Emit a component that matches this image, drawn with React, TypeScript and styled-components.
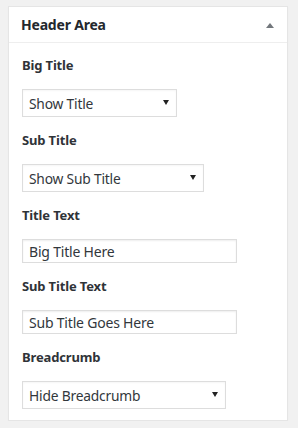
import React from "react";
import styled, { createGlobalStyle } from "styled-components";

const Global = createGlobalStyle`
  html, body { margin: 0; padding: 0; background: #f1f1f1; }
  body { font-family: "Noto Sans", "Open Sans", sans-serif; }
  * { box-sizing: border-box; }
`;

const Page = styled.div`
  padding: 6px 10px 0 8px;
`;

const Panel = styled.div`
  width: 280px;
  background: #fff;
  border: 1px solid #e5e5e5;
  box-shadow: 0 1px 1px rgba(0, 0, 0, 0.04);
`;

const Header = styled.div`
  height: 36px;
  display: flex;
  align-items: center;
  justify-content: space-between;
  padding: 0 13px 0 12px;
  border-bottom: 1px solid #eee;
`;

const HeaderTitle = styled.h2`
  margin: 0;
  font-size: 14px;
  font-weight: 700;
  color: #23282d;
  letter-spacing: -0.2px;
`;

const Toggle = styled.span`
  width: 0;
  height: 0;
  border-left: 4px solid transparent;
  border-right: 4px solid transparent;
  border-bottom: 5px solid #72777c;
  margin-top: 2px;
`;

const Body = styled.div`
  padding: 13px 12px 11px 13px;
`;

const Field = styled.div`
  display: flex;
  flex-direction: column;
  align-items: flex-start;
  & + & {
    margin-top: 14px;
  }
`;

const Label = styled.label`
  font-size: 13px;
  line-height: 18px;
  font-weight: 700;
  color: #2f3338;
  margin-bottom: 15px;
  letter-spacing: -0.15px;
`;

const SelectWrap = styled.div<{ $w: number }>`
  position: relative;
  width: ${(p) => p.$w}px;
  height: 28px;
`;

const Select = styled.select`
  appearance: none;
  -webkit-appearance: none;
  width: 100%;
  height: 100%;
  border: 1px solid #ddd;
  border-radius: 0;
  background: #fff;
  padding: 0 0 0 6px;
  font-family: inherit;
  font-size: 13.8px;
  color: #32373c;
  box-shadow: inset 0 1px 2px rgba(0, 0, 0, 0.04);
  outline: none;
  letter-spacing: -0.2px;
`;

const Arrow = styled.span`
  position: absolute;
  right: 8px;
  top: 11px;
  width: 0;
  height: 0;
  border-left: 3px solid transparent;
  border-right: 3px solid transparent;
  border-top: 5px solid #222;
  pointer-events: none;
`;

const Input = styled.input`
  width: 215px;
  height: 24px;
  border: 1px solid #ddd;
  border-radius: 0;
  background: #fff;
  padding: 0 6px;
  font-family: inherit;
  font-size: 14px;
  color: #32373c;
  box-shadow: inset 0 1px 2px rgba(0, 0, 0, 0.07);
  outline: none;
  letter-spacing: -0.2px;
`;

function SelectField({ label, value, width }: { label: string; value: string; width: number }) {
  return (
    <Field>
      <Label>{label}</Label>
      <SelectWrap $w={width}>
        <Select defaultValue={value}>
          <option>{value}</option>
        </Select>
        <Arrow />
      </SelectWrap>
    </Field>
  );
}

function TextField({ label, value }: { label: string; value: string }) {
  return (
    <Field>
      <Label>{label}</Label>
      <Input defaultValue={value} />
    </Field>
  );
}

export default function App() {
  return (
    <>
      <Global />
      <Page>
        <Panel>
          <Header>
            <HeaderTitle>Header Area</HeaderTitle>
            <Toggle />
          </Header>
          <Body>
            <SelectField label="Big Title" value="Show Title" width={155} />
            <SelectField label="Sub Title" value="Show Sub Title" width={182} />
            <TextField label="Title Text" value="Big Title Here" />
            <TextField label="Sub Title Text" value="Sub Title Goes Here" />
            <SelectField label="Breadcrumb" value="Hide Breadcrumb" width={204} />
          </Body>
        </Panel>
      </Page>
    </>
  );
}
